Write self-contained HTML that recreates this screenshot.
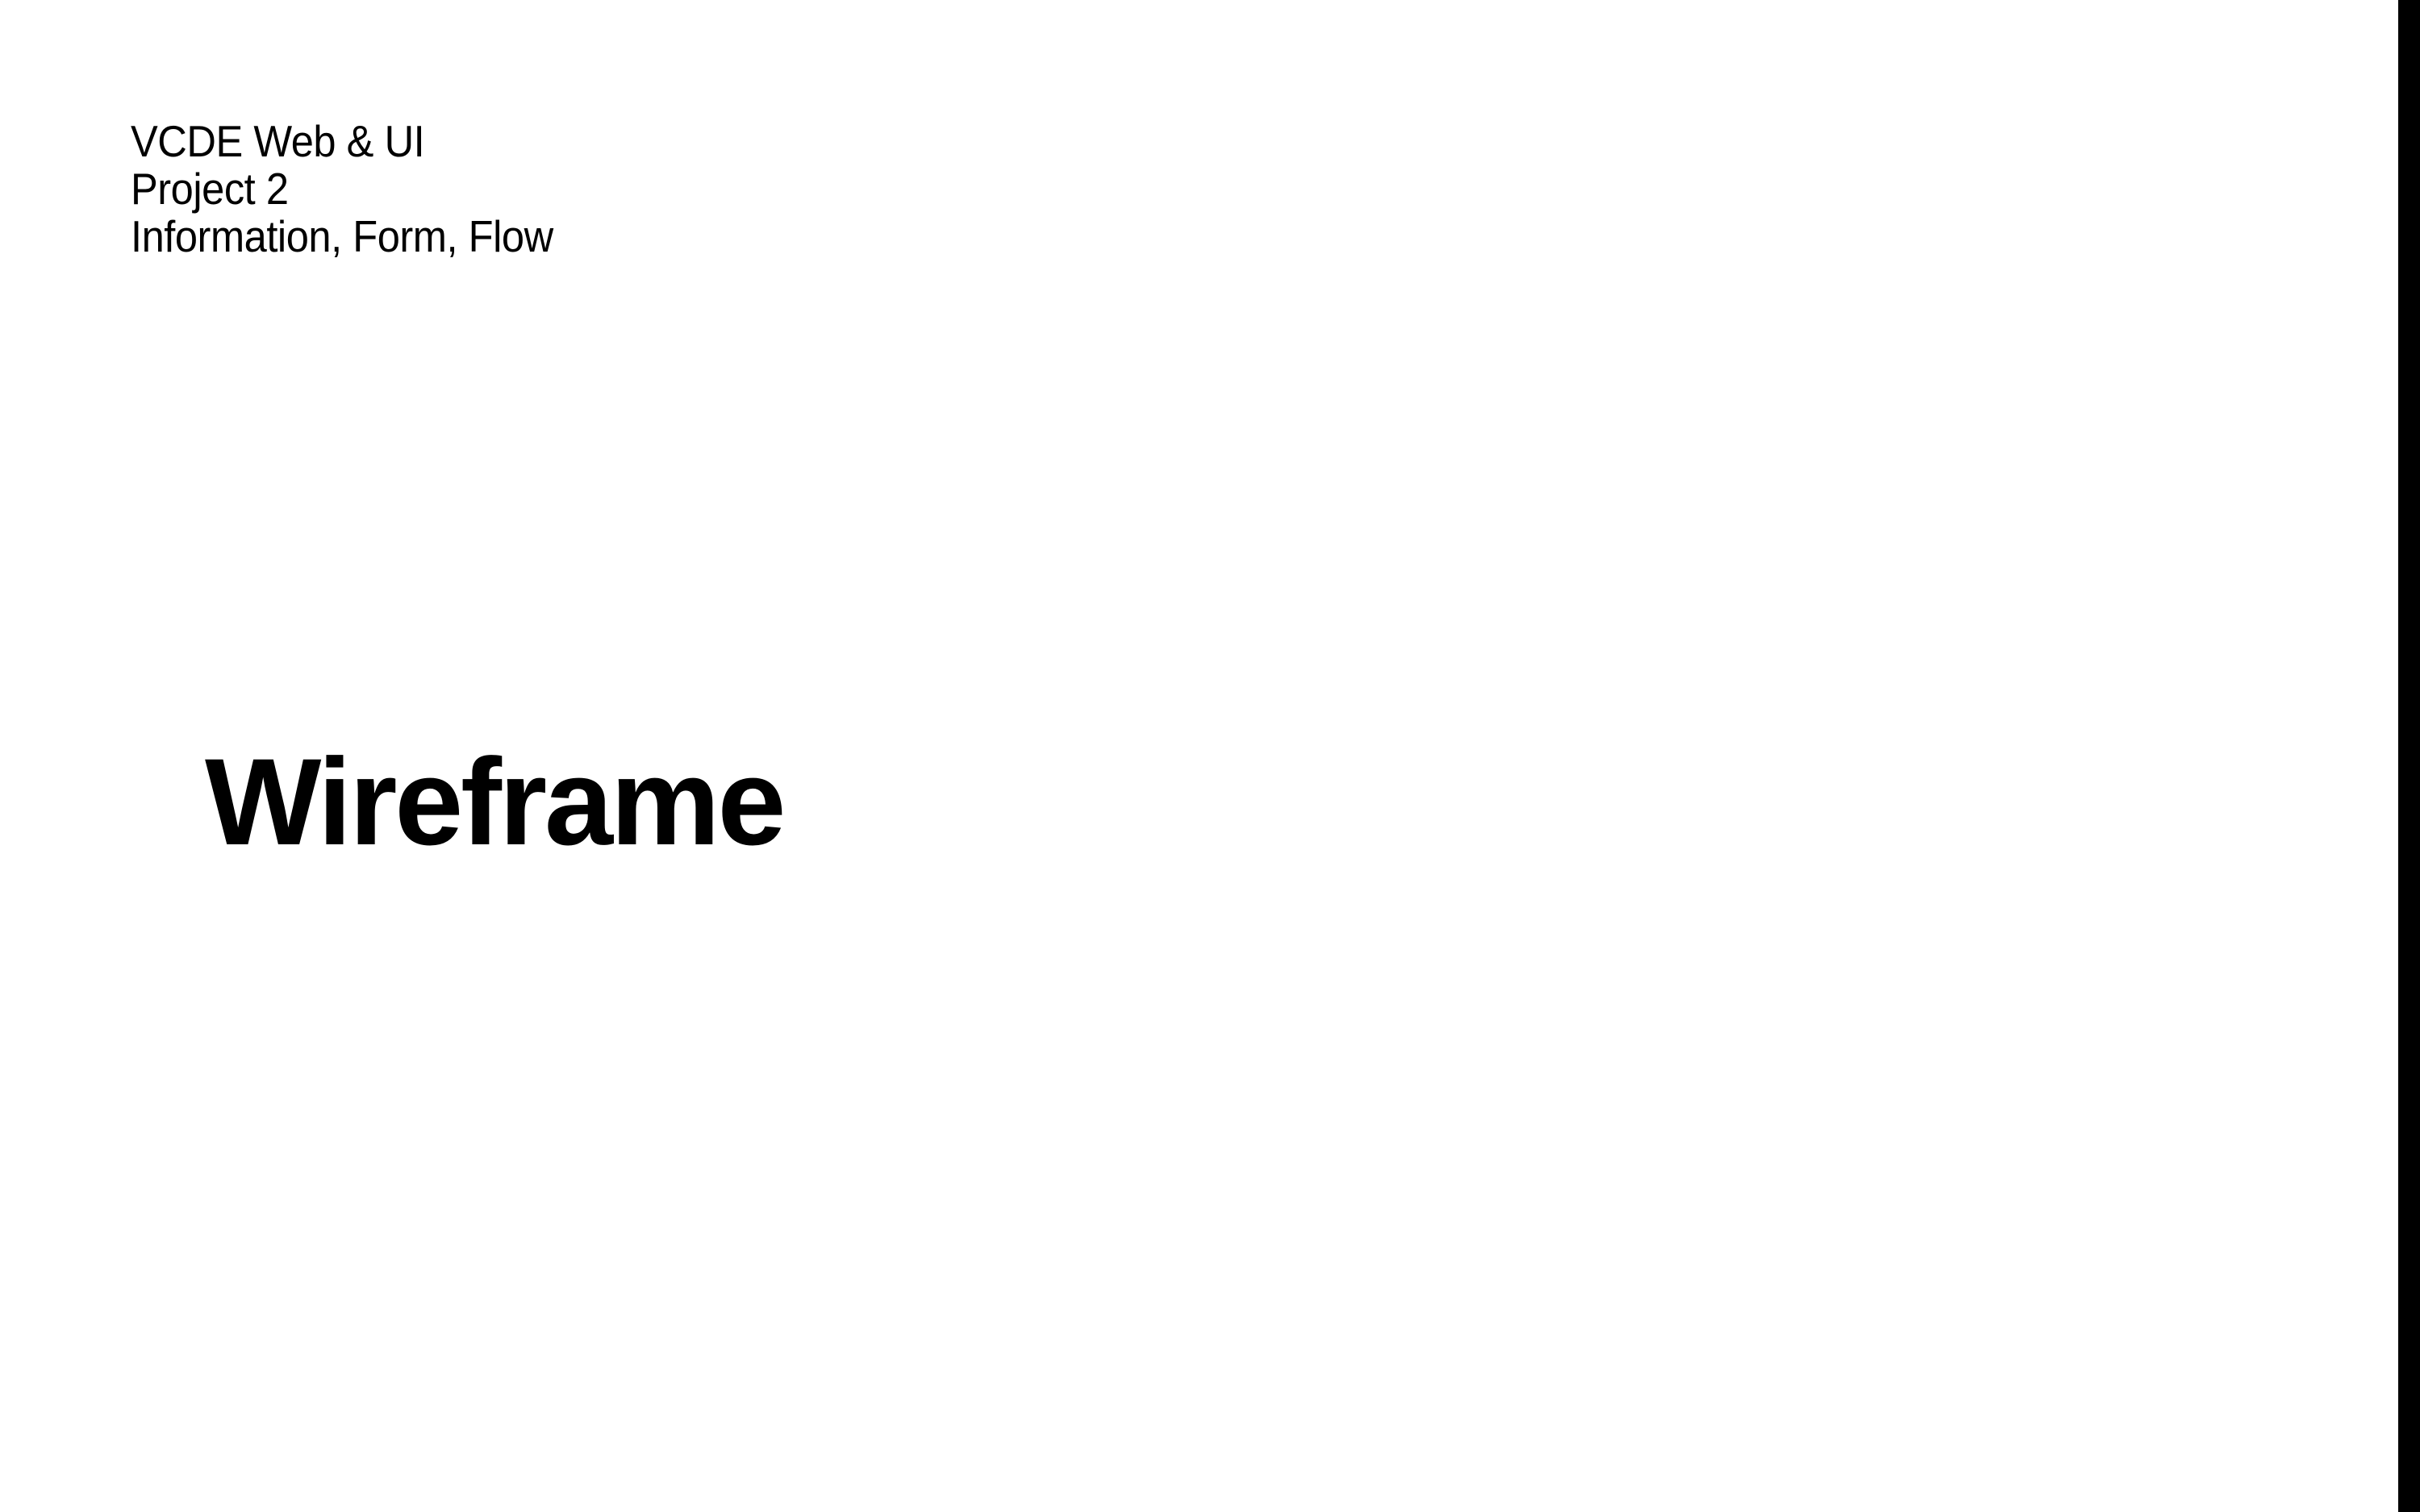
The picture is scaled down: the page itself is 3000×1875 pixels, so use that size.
<!DOCTYPE html>
<html><head><style>
html,body{margin:0;padding:0;}
body{width:3000px;height:1875px;background:#fff;position:relative;overflow:hidden;font-family:"Liberation Sans",sans-serif;color:#000;}
.info{position:absolute;left:162px;top:146px;font-size:55px;line-height:59px;letter-spacing:-0.5px;transform:scaleX(0.92);transform-origin:left top;white-space:nowrap;}
.title{position:absolute;left:254px;top:905px;font-size:153px;font-weight:bold;line-height:180px;letter-spacing:-3.3px;white-space:nowrap;}
.bar{position:absolute;left:2973px;top:0;width:27px;height:1875px;background:#000;}
</style></head><body>
<div class="info">VCDE Web &amp; UI<br>Project 2<br>Information, Form, Flow</div>
<div class="title">Wireframe</div>
<div class="bar"></div>
</body></html>
